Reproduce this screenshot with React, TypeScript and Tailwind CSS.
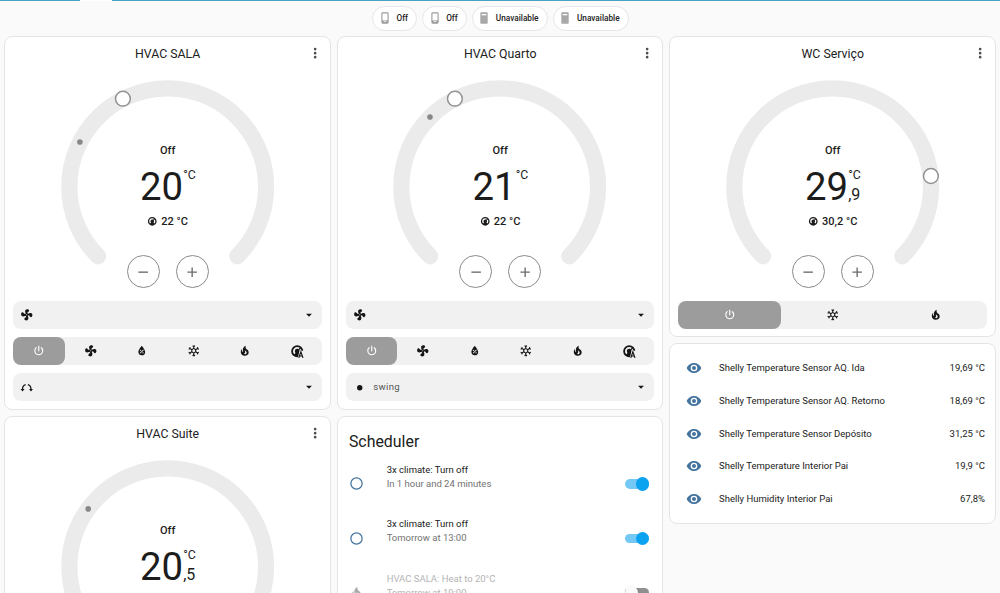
import type { ReactNode } from "react";

const paths = {
  fan: "M12,11A1,1 0 0,0 11,12A1,1 0 0,0 12,13A1,1 0 0,0 13,12A1,1 0 0,0 12,11M12.5,2C17,2 17.11,5.57 14.75,6.75C13.76,7.24 13.32,8.29 13.13,9.22C13.61,9.42 14.03,9.73 14.35,10.13C18.05,8.13 22.03,8.92 22.03,12.5C22.03,17 18.46,17.1 17.28,14.73C16.78,13.74 15.72,13.3 14.79,13.11C14.59,13.59 14.28,14 13.88,14.34C15.87,18.03 15.08,22 11.5,22C7,22 6.91,18.42 9.27,17.24C10.25,16.75 10.69,15.71 10.89,14.79C10.4,14.59 9.97,14.27 9.65,13.87C5.96,15.85 2,15.07 2,11.5C2,7 5.56,6.89 6.74,9.26C7.24,10.25 8.29,10.68 9.22,10.87C9.41,10.39 9.73,9.97 10.14,9.65C8.15,5.96 8.94,2 12.5,2Z",
  power:
    "M16.56,5.44L15.11,6.89C16.84,7.94 18,9.83 18,12A6,6 0 0,1 12,18A6,6 0 0,1 6,12C6,9.83 7.16,7.94 8.88,6.88L7.44,5.44C5.36,6.88 4,9.28 4,12A8,8 0 0,0 12,20A8,8 0 0,0 20,12C20,9.28 18.64,6.88 16.56,5.44M13,3H11V13H13",
  dry: "M12,3.25C12,3.25 6,10 6,14C6,17.32 8.69,20 12,20A6,6 0 0,0 18,14C18,10 12,3.25 12,3.25M14.47,9.97L15.53,11.03L9.53,17.03L8.47,15.97M9.75,10A1.25,1.25 0 0,1 11,11.25A1.25,1.25 0 0,1 9.75,12.5A1.25,1.25 0 0,1 8.5,11.25A1.25,1.25 0 0,1 9.75,10M14.25,14.5A1.25,1.25 0 0,1 15.5,15.75A1.25,1.25 0 0,1 14.25,17A1.25,1.25 0 0,1 13,15.75A1.25,1.25 0 0,1 14.25,14.5Z",
  cool: "M20.79,13.95L18.46,14.57L16.46,13.44V10.56L18.46,9.43L20.79,10.05L21.31,8.12L19.54,7.65L20,5.88L18.07,5.36L17.45,7.69L15.45,8.82L13,7.38V5.12L14.71,3.41L13.29,2L12,3.29L10.71,2L9.29,3.41L11,5.12V7.38L8.5,8.82L6.5,7.69L5.92,5.36L4,5.88L4.47,7.65L2.7,8.12L3.22,10.05L5.55,9.43L7.55,10.56V13.45L5.55,14.58L3.22,13.96L2.7,15.89L4.47,16.36L4,18.12L5.93,18.64L6.55,16.31L8.55,15.18L11,16.62V18.88L9.29,20.59L10.71,22L12,20.71L13.29,22L14.7,20.59L13,18.88V16.62L15.5,15.17L17.5,16.3L18.12,18.63L20,18.12L19.53,16.35L21.3,15.88L20.79,13.95M9.5,10.56L12,9.11L14.5,10.56V13.44L12,14.89L9.5,13.44V10.56Z",
  heat: "M17.66 11.2C17.43 10.9 17.15 10.64 16.89 10.38C16.22 9.78 15.46 9.35 14.82 8.72C13.33 7.26 13 4.85 13.95 3C13 3.23 12.17 3.75 11.46 4.32C8.87 6.4 7.85 10.07 9.07 13.22C9.11 13.32 9.15 13.42 9.15 13.55C9.15 13.77 9 13.97 8.8 14.05C8.57 14.15 8.33 14.09 8.14 13.93C8.08 13.88 8.04 13.83 8 13.76C6.87 12.33 6.69 10.28 7.45 8.64C5.78 10 4.87 12.3 5 14.47C5.06 14.97 5.12 15.47 5.29 15.97C5.43 16.57 5.7 17.17 6 17.7C7.08 19.43 8.95 20.67 10.96 20.92C13.1 21.19 15.39 20.8 17.03 19.32C18.86 17.66 19.5 15 18.56 12.72L18.43 12.46C18.22 12 17.66 11.2 17.66 11.2M14.5 17.5C14.22 17.74 13.76 18 13.4 18.1C12.28 18.5 11.16 17.94 10.5 17.28C11.69 17 12.4 16.12 12.61 15.23C12.78 14.43 12.46 13.77 12.33 13C12.21 12.26 12.23 11.63 12.5 10.94C12.69 11.32 12.89 11.7 13.13 12C13.9 13 15.11 13.44 15.37 14.8C15.41 14.94 15.43 15.08 15.43 15.23C15.46 16.05 15.1 16.95 14.5 17.5H14.5Z",
  thermostat:
    "M16.95,16.95L14.83,14.83C15.55,14.1 16,13.1 16,12C16,11.26 15.79,10.57 15.43,10L17.6,7.81C18.5,9 19,10.43 19,12C19,13.93 18.22,15.68 16.95,16.95M12,5C13.57,5 15,5.5 16.19,6.4L14,8.56C13.43,8.21 12.74,8 12,8A4,4 0 0,0 8,12C8,13.1 8.45,14.1 9.17,14.83L7.05,16.95C5.78,15.68 5,13.93 5,12A7,7 0 0,1 12,5M12,2A10,10 0 0,0 2,12A10,10 0 0,0 12,22A10,10 0 0,0 22,12A10,10 0 0,0 12,2Z",
  eye: "M12,9A3,3 0 0,0 9,12A3,3 0 0,0 12,15A3,3 0 0,0 15,12A3,3 0 0,0 12,9M12,17A5,5 0 0,1 7,12A5,5 0 0,1 12,7A5,5 0 0,1 17,12A5,5 0 0,1 12,17M12,4.5C7,4.5 2.73,7.61 1,12C2.73,16.39 7,19.5 12,19.5C17,19.5 21.27,16.39 23,12C21.27,7.61 17,4.5 12,4.5Z",
  ring: "M12,20A8,8 0 0,1 4,12A8,8 0 0,1 12,4A8,8 0 0,1 20,12A8,8 0 0,1 12,20M12,2A10,10 0 0,0 2,12A10,10 0 0,0 12,22A10,10 0 0,0 22,12A10,10 0 0,0 12,2Z",
  dots: "M12,16A2,2 0 0,1 14,18A2,2 0 0,1 12,20A2,2 0 0,1 10,18A2,2 0 0,1 12,16M12,10A2,2 0 0,1 14,12A2,2 0 0,1 12,14A2,2 0 0,1 10,12A2,2 0 0,1 12,10M12,4A2,2 0 0,1 14,6A2,2 0 0,1 12,8A2,2 0 0,1 10,6A2,2 0 0,1 12,4Z",
  minus: "M19,13H5V11H19V13Z",
  plus: "M19,13H13V19H11V13H5V11H11V5H13V11H19V13Z",
  caret: "M7,10L12,15L17,10H7Z",
  dot: "M12,7.2A4.8,4.8 0 1,0 12,16.8A4.8,4.8 0 1,0 12,7.2Z",
};

function Icon({ name, className }: { name: keyof typeof paths; className: string }) {
  return (
    <svg viewBox="0 0 24 24" fill="currentColor" className={`shrink-0 ${className}`}>
      <path d={paths[name]} />
    </svg>
  );
}

function AutoIcon() {
  return (
    <svg viewBox="0 0 24 24" className="ml-[2px] size-[14.5px] shrink-0">
      <clipPath id="autoCut">
        <path d="M0 0H24V11H16L12.5 24H0Z" />
      </clipPath>
      <path d={paths.thermostat} fill="currentColor" clipPath="url(#autoCut)" />
      <path d="M14.5 23L18 12.8L21.5 23M15.6 19.8H20.4" fill="none" stroke="currentColor" strokeWidth="1.9" />
    </svg>
  );
}

function OscillateIcon() {
  return (
    <svg viewBox="0 0 24 24" className="size-[13.5px] shrink-0" fill="none" stroke="currentColor" strokeWidth="2.2">
      <path d="M4.5 14.5C4.5 10 6.5 7.5 10 6.6M19.5 14.5C19.5 10 17.5 7.5 14 6.6" />
      <path d="M1 14H8L4.5 18.5ZM16 14H23L19.5 18.5Z" fill="currentColor" stroke="none" />
    </svg>
  );
}

function DeviceIcon({ filled }: { filled: boolean }) {
  return (
    <svg viewBox="0 0 8 12" className="h-[12px] w-[8px] shrink-0">
      {filled ? (
        <>
          <rect x="0.3" y="0.3" width="7.4" height="11.4" rx="0.8" fill="#a8a8a8" />
          <rect x="1.7" y="2" width="4.6" height="1.3" fill="#fff" />
        </>
      ) : (
        <>
          <rect x="0.9" y="0.9" width="6.2" height="10.2" rx="0.8" fill="#fff" stroke="#9b9b9b" strokeWidth="1.1" />
          <rect x="1" y="8.4" width="6" height="2.6" fill="#9b9b9b" />
          <rect x="2.7" y="9.2" width="2.6" height="0.8" fill="#fff" />
        </>
      )}
    </svg>
  );
}

function Chip({ label, filled = false }: { label: string; filled?: boolean }) {
  return (
    <div
      className={`flex h-[24.6px] items-center gap-[7.6px] rounded-full border border-[#e6e6e6] bg-white pl-[7.5px] text-[8.25px] font-medium text-[#212121] ${
        filled ? "w-[76.2px]" : "w-[44.8px]"
      }`}
    >
      <DeviceIcon filled={filled} />
      <span>{label}</span>
    </div>
  );
}

function Card({ className, children }: { className: string; children: ReactNode }) {
  return <section className={`rounded-[8px] border border-[#e4e4e4] bg-white ${className}`}>{children}</section>;
}

type Point = [number, number];

type ThermostatProps = {
  title: string;
  value: string;
  decimal?: string;
  current?: string;
  handle?: Point;
  dot?: Point;
  className: string;
  children?: ReactNode;
};

function Thermostat({ title, value, decimal, current, handle, dot, className, children }: ThermostatProps) {
  return (
    <Card className={`flex flex-col px-[8px] ${className}`}>
      <header className="grid h-[34px] grid-cols-[24px_1fr_24px] items-center">
        <span />
        <h2 className="text-center text-[12.3px] leading-[18px] text-[#212121]">{title}</h2>
        <Icon name="dots" className="mb-[2.4px] ml-[8.8px] size-[16.3px] text-[#4f4f4f]" />
      </header>
      <div className="mt-[8.6px] grid h-[220.6px] shrink-0 justify-center">
        <svg viewBox="0 0 213.4 213.4" className="col-start-1 row-start-1 h-[213.4px] w-[213.4px] overflow-visible">
          <path
            d="M37.1 176.3A98.4 98.4 0 1 1 176.3 176.3"
            fill="none"
            stroke="#ebebeb"
            strokeWidth="16.2"
            strokeLinecap="round"
          />
          {dot && <circle cx={dot[0]} cy={dot[1]} r="2.8" fill="#888" />}
          {handle && <circle cx={handle[0]} cy={handle[1]} r="7.4" fill="#fff" stroke="#929292" strokeWidth="1.5" />}
        </svg>
        <div className="col-start-1 row-start-1 flex flex-col items-center text-[#1c1c1c]">
          <div className="mt-[63px] text-[11px] leading-[16px] font-medium">Off</div>
          <div className="mt-[6px] flex h-[44px] items-stretch pl-[1.4px]">
            <span className="text-[38.3px] leading-[44px]">{value}</span>
            <span className="flex w-[13.5px] flex-col pt-[3px]">
              <span className="text-[12.3px] leading-[15px] whitespace-nowrap">°C</span>
              <span className="text-[16px] leading-[23px]">{decimal}</span>
            </span>
          </div>
          {current && (
            <div className="mt-[5px] flex items-center gap-[3.5px] text-[11px] leading-[16px] font-medium">
              <Icon name="thermostat" className="mb-px size-[10.5px]" />
              <span>{current}</span>
            </div>
          )}
          {current && (
            <div className="mt-[25.2px] flex gap-[16px] text-[#6b6b6b]">
              <button className="grid size-[33px] place-items-center rounded-full border border-[#8a8a8a]">
                <Icon name="minus" className="size-[16.3px]" />
              </button>
              <button className="grid size-[33px] place-items-center rounded-full border border-[#8a8a8a]">
                <Icon name="plus" className="size-[16.3px]" />
              </button>
            </div>
          )}
        </div>
      </div>
      {children}
    </Card>
  );
}

function SelectRow({ icon, label }: { icon: ReactNode; label?: string }) {
  return (
    <div className="flex h-[28px] items-center rounded-[8px] bg-[#f1f1f1] pr-[6px] pl-[6.8px] text-[#151515]">
      {icon}
      <span className="ml-[7px] flex-1 text-[9.6px] tracking-[0.3px] text-[#555]">{label}</span>
      <Icon name="caret" className="size-[14px]" />
    </div>
  );
}

function ModeRow({ children, className }: { children: ReactNode; className: string }) {
  return (
    <div className={`grid h-[28px] rounded-[8px] bg-[#f1f1f1] text-[#151515] ${className}`}>
      <div className="grid place-items-center rounded-[8px] bg-[#9c9c9c] text-white">
        <Icon name="power" className="size-[13.5px]" />
      </div>
      {children}
    </div>
  );
}

function Mode({ children }: { children: ReactNode }) {
  return <div className="grid place-items-center">{children}</div>;
}

function Controls({ swing }: { swing: ReactNode }) {
  return (
    <div className="flex flex-col gap-[8.4px]">
      <SelectRow icon={<Icon name="fan" className="size-[13.5px]" />} />
      <ModeRow className="grid-cols-6">
        <Mode><Icon name="fan" className="size-[13.5px]" /></Mode>
        <Mode><Icon name="dry" className="size-[13.5px]" /></Mode>
        <Mode><Icon name="cool" className="size-[13.5px]" /></Mode>
        <Mode><Icon name="heat" className="size-[13.5px]" /></Mode>
        <Mode><AutoIcon /></Mode>
      </ModeRow>
      {swing}
    </div>
  );
}

function Toggle({ on }: { on: boolean }) {
  return (
    <span
      className={`flex h-[9.5px] w-[24.5px] items-center rounded-full ${
        on ? "justify-end bg-[#74c8f5]" : "justify-start bg-[#8f8f8f]"
      }`}
    >
      <span
        className={`size-[13.6px] shrink-0 rounded-full ${
          on ? "bg-[#0ba2f0]" : "bg-[#fafafa] shadow-[0_1px_2px_rgba(0,0,0,0.3)]"
        }`}
      />
    </span>
  );
}

function Schedule({ title, time, off = false }: { title: string; time: string; off?: boolean }) {
  return (
    <div className="flex h-[54.4px] items-start">
      <Icon
        name={off ? "heat" : "ring"}
        className={`mt-[13.3px] size-[15px] ${off ? "text-[#a9a9a9]" : "text-[#44739e]"}`}
      />
      <div className="ml-[22.7px] flex-1 text-[9.5px] leading-[13.8px]">
        <div className={off ? "text-[#b4b4b4]" : "text-[#212121]"}>{title}</div>
        <div className={off ? "text-[#b4b4b4]" : "text-[#727272]"}>{time}</div>
      </div>
      <div className="mt-[16.2px]">
        <Toggle on={!off} />
      </div>
    </div>
  );
}

const sensors = [
  ["Shelly Temperature Sensor AQ. Ida", "19,69 °C"],
  ["Shelly Temperature Sensor AQ. Retorno", "18,69 °C"],
  ["Shelly Temperature Sensor Depósito", "31,25 °C"],
  ["Shelly Temperature Interior Pai", "19,9 °C"],
  ["Shelly Humidity Interior Pai", "67,8%"],
];

export default function App() {
  return (
    <main className="h-[593px] w-[1000px] overflow-hidden bg-[#fafafa] font-['Roboto',sans-serif]">
      <div className="flex h-px bg-[#4aa3c0]">
        <span className="ml-[80px] w-[32px] bg-white" />
      </div>
      <div className="flex h-[35.4px] gap-[4.9px] pt-[5px] pl-[372.4px]">
        <Chip label="Off" />
        <Chip label="Off" />
        <Chip label="Unavailable" filled />
        <Chip label="Unavailable" filled />
      </div>
      <div className="flex items-start gap-[6px] pl-[4.45px]">
        <div className="flex w-[326.5px] shrink-0 flex-col gap-[6px]">
          <Thermostat title="HVAC SALA" value="20" current="22 °C" handle={[61.9, 18.7]} dot={[18.9, 62]} className="h-[374px]">
            <Controls swing={<SelectRow icon={<OscillateIcon />} />} />
          </Thermostat>
          <Thermostat title="HVAC Suite" value="20" decimal=",5" dot={[27.2, 48.9]} className="h-[374px]" />
        </div>
        <div className="flex w-[326.5px] shrink-0 flex-col gap-[6px]">
          <Thermostat title="HVAC Quarto" value="21" current="22 °C" handle={[61.9, 18.7]} dot={[37, 37]} className="h-[374px]">
            <Controls swing={<SelectRow icon={<Icon name="dot" className="size-[13.5px]" />} label="swing" />} />
          </Thermostat>
          <Card className="h-[300px] pr-[13.2px] pl-[11px]">
            <h2 className="mt-[12.2px] mb-[9.4px] text-[15.9px] leading-[24px] text-[#212121]">Scheduler</h2>
            <Schedule title="3x climate: Turn off" time="In 1 hour and 24 minutes" />
            <Schedule title="3x climate: Turn off" time="Tomorrow at 13:00" />
            <Schedule title="HVAC SALA: Heat to 20°C" time="Tomorrow at 19:00" off />
          </Card>
        </div>
        <div className="flex w-[326.5px] shrink-0 flex-col gap-[6px]">
          <Thermostat title="WC Serviço" value="29" decimal=",9" current="30,2 °C" handle={[204.9, 96]} className="h-[301px]">
            <ModeRow className="grid-cols-3">
              <Mode><Icon name="cool" className="size-[13.5px]" /></Mode>
              <Mode><Icon name="heat" className="size-[13.5px]" /></Mode>
            </ModeRow>
          </Thermostat>
          <Card className="h-[180.2px] pt-[7.7px] pr-[10px] pl-[16px]">
            {sensors.map(([name, value]) => (
              <div key={name} className="flex h-[32.65px] items-center text-[9.5px] text-[#212121]">
                <Icon name="eye" className="size-[16px] text-[#44739e]" />
                <span className="ml-[16.6px] flex-1">{name}</span>
                <span>{value}</span>
              </div>
            ))}
          </Card>
        </div>
      </div>
    </main>
  );
}
